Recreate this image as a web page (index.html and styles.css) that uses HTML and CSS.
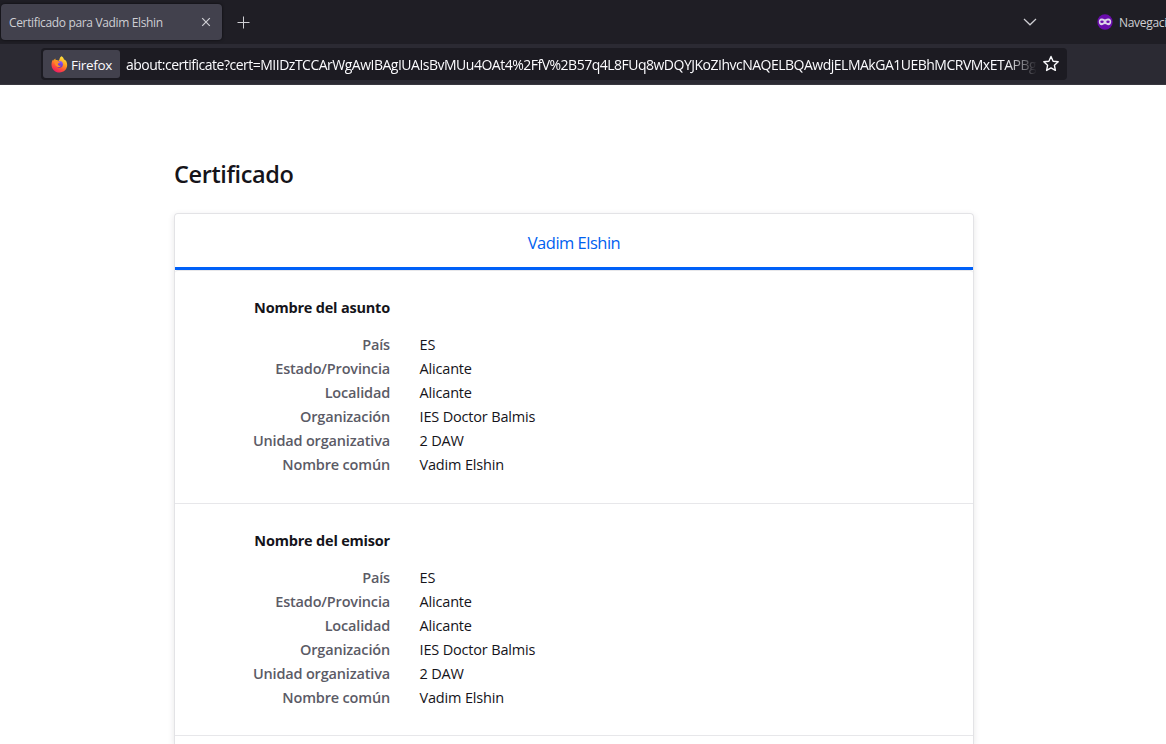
FILE: index.html
```html
<!DOCTYPE html>
<html lang="es">
<head>
<meta charset="utf-8">
<title>Certificado para Vadim Elshin</title>
<link rel="stylesheet" href="styles.css">
</head>
<body>
<header class="browser">
  <div class="tabs">
    <div class="tab"><span class="tab-title">Certificado para Vadim Elshin</span>
      <svg class="close" width="10" height="10" viewBox="0 0 10 10"><path d="M1.2 1.2l7.6 7.6M8.8 1.2L1.2 8.8"/></svg>
    </div>
    <svg class="plus" width="13" height="13" viewBox="0 0 13 13"><path d="M6.500 .5v12M.5 6.500h12"/></svg>
    <svg class="chevron" width="14" height="8" viewBox="0 0 14 8"><path d="M1 1l6 5.8L13 1"/></svg>
    <svg class="mask" width="16" height="16" viewBox="0 0 16 16"><circle cx="8" cy="8" r="7.7" fill="#6a0dad"/><path d="M8 5.500C6.600 4.700 5.500 4.500 4.400 4.500 2.800 4.500 1.800 5.800 1.800 7.700s1.100 3.600 2.800 3.600c1.500 0 2.200-1.200 3.400-1.200s1.900 1.200 3.400 1.200c1.700 0 2.800-1.700 2.800-3.600s-1-3.200-2.600-3.200C10.500 4.500 9.400 4.700 8 5.500z" fill="#dcd3e8"/><ellipse cx="5" cy="7.800" rx="1.700" ry="1.200" fill="#6a0dad"/><ellipse cx="11" cy="7.800" rx="1.700" ry="1.200" fill="#6a0dad"/></svg>
    <span class="private">Navegación privada</span>
  </div>
  <div class="toolbar">
    <div class="urlbar">
      <div class="identity">
        <svg width="17" height="17" viewBox="0 0 17 17">
          <defs>
            <linearGradient id="flame" x1=".8" y1="0" x2=".3" y2="1"><stop offset="0" stop-color="#fff044"/><stop offset=".4" stop-color="#ffa31f"/><stop offset=".7" stop-color="#ff5038"/><stop offset="1" stop-color="#ee1766"/></linearGradient>
            <linearGradient id="globe" x1=".6" y1="0" x2=".4" y2="1"><stop offset="0" stop-color="#9059ff"/><stop offset="1" stop-color="#5b2fbf"/></linearGradient>
          </defs>
          <path d="M10.300.3c1.400.7 2.400 1.900 2.700 3.100 1 .3 1.900 1.100 2.300 1.900 2.600 5.400-.8 11.200-6.800 11.200C3.900 16.500.5 13 .5 8.700c0-2 .5-3.900 1.700-5.200l.4 1.200c.3-.9.800-1.700 1.700-2.200l.4 1.700c1-.2 2 0 2.800.5.700-.4 1-1 1-1.600.2-1.100.8-2.100 1.800-2.800z" fill="url(#flame)"/>
          <circle cx="8.500" cy="8.300" r="3.400" fill="url(#globe)"/>
          <path d="M2.800 5.100c1.500-.7 3.400-.5 4.500.3 1 0 1.700.2 1.800.7-.5.900-1.500.9-2.300 1.600.1 1.500 1.600 2.500 3.500 1.900-1.300 2.200-5 2-6.100-.8z" fill="#ff8a28"/>
        </svg>
        <span class="brand">Firefox</span>
      </div>
      <div class="url"><span class="url-text">about:certificate?cert=MIIDzTCCArWgAwIBAgIUAIsBvMUu4OAt4%2FfV%2B57q4L8FUq8wDQYJKoZIhvcNAQELBQAwdjELMAkGA1UEBhMCRVMxETAPBgNV</span></div>
      <svg class="star" width="18" height="18" viewBox="0 0 18 18"><path d="M9 1.500l2.100 4.700 5.100.6-3.800 3.500 1 5.100L9 12.900l-4.400 2.500 1-5.100-3.800-3.500 5.100-.6z"/></svg>
    </div>
  </div>
</header>
<main class="page">
  <h1><span class="h1-text">Certificado</span></h1>
  <div class="card">
    <div class="cert-tab"><span class="cert-name">Vadim Elshin</span></div>
    <section class="group">
      <h2><span class="g-title">Nombre del asunto</span></h2>
      <dl>
        <dt>País</dt><dd>ES</dd>
        <dt>Estado/Provincia</dt><dd>Alicante</dd>
        <dt>Localidad</dt><dd>Alicante</dd>
        <dt>Organización</dt><dd>IES Doctor Balmis</dd>
        <dt>Unidad organizativa</dt><dd>2 DAW</dd>
        <dt>Nombre común</dt><dd>Vadim Elshin</dd>
      </dl>
    </section>
    <section class="group second">
      <h2><span class="g-title">Nombre del emisor</span></h2>
      <dl>
        <dt>País</dt><dd>ES</dd>
        <dt>Estado/Provincia</dt><dd>Alicante</dd>
        <dt>Localidad</dt><dd>Alicante</dd>
        <dt>Organización</dt><dd>IES Doctor Balmis</dd>
        <dt>Unidad organizativa</dt><dd>2 DAW</dd>
        <dt>Nombre común</dt><dd>Vadim Elshin</dd>
      </dl>
    </section>
    <section class="group last"></section>
  </div>
</main>
</body>
</html>
```
FILE: styles.css
```css
* { box-sizing: border-box; }
body { margin: 0; height: 744px; overflow: hidden; background: #fff; color: #15141a; font-family: "Open Sans", "Noto Sans", sans-serif; font-size: 14.5px; }
svg { display: block; flex: none; fill: none; }
.browser { height: 85px; background: #2b2a33; border-bottom: 1px solid #38373f; }
.tabs { height: 44px; background: #1f1e25; display: flex; align-items: center; overflow: hidden; white-space: nowrap; font-size: 12px; color: #cfcfd4; }
.tab { width: 221px; height: 36px; margin-left: 1px; border-radius: 4px; background: #42414d; box-shadow: 0 0 3px #000a; display: flex; align-items: center; justify-content: space-between; padding: 0 11px 0 8px; flex: none; }
.tab-title { letter-spacing: -0.35px; padding-top: 1px; }
.close, .plus, .chevron { stroke: #cfcfd4; stroke-width: 1.2; }
.plus { margin-left: 15px; margin-top: 1px; stroke-width: 1; }
.chevron { margin-left: 773px; }
.mask { margin-left: 60px; }
.private { margin-left: 6px; padding-top: 1px; letter-spacing: -0.3px; }
.toolbar { height: 40px; padding: 4px 0 0 41px; }
.urlbar { width: 1026px; height: 32px; border-radius: 4px; background: #1c1b22; display: flex; align-items: center; padding: 0 7px 0 2px; color: #fbfbfe; font-size: 14px; }
.identity { width: 77px; height: 28px; border-radius: 3px; background: #42414d; display: flex; align-items: center; gap: 3px; padding-left: 8px; flex: none; }
.brand { font-size: 13.5px; letter-spacing: -0.3px; padding-top: 1px; }
.url { width: 911px; margin-left: 6px; padding-top: 1px; overflow: hidden; white-space: nowrap; mask-image: linear-gradient(to right, #000 880px, transparent 911px); }
.url-text { letter-spacing: -0.5px; }
.star { margin-left: 5px; stroke: #fbfbfe; stroke-width: 1.4; stroke-linejoin: round; }
.page { width: 800px; height: 659px; margin-left: 174px; padding-top: 71px; overflow: visible; }
h1 { margin: 0; height: 36px; line-height: 36px; font-size: 23.500px; font-weight: 600; letter-spacing: -0.4px; }
.card { margin-top: 21px; height: 531px; border: 1px solid #e3e3e6; border-bottom: 0; border-radius: 4px 4px 0 0; box-shadow: 0 2px 6px rgba(58,57,68,.13); }
.cert-tab { height: 56px; border-bottom: 3px solid #0060f8; padding-top: 1px; line-height: 56px; text-align: center; color: #0061f0; font-size: 16.5px; letter-spacing: -0.5px; }
.group { height: 233px; padding-top: 25px; border-top: 1px solid #e7e7ea; border-radius: 3px 3px 0 0; }
.group.second { height: 232px; border-radius: 0; }
.group.last { height: 8px; padding: 0; border-radius: 0; }
h2 { margin: 0 0 13px; width: 215px; text-align: right; height: 24px; line-height: 24px; font-size: 14.5px; font-weight: 700; letter-spacing: -0.2px; }
dl { margin: 0; display: grid; grid-template-columns: 215px 1fr; column-gap: 29.5px; grid-auto-rows: 24px; line-height: 24px; letter-spacing: -0.17px; }
dt { text-align: right; color: #5b5b66; font-weight: 600; }
dd { margin: 0; }
```
